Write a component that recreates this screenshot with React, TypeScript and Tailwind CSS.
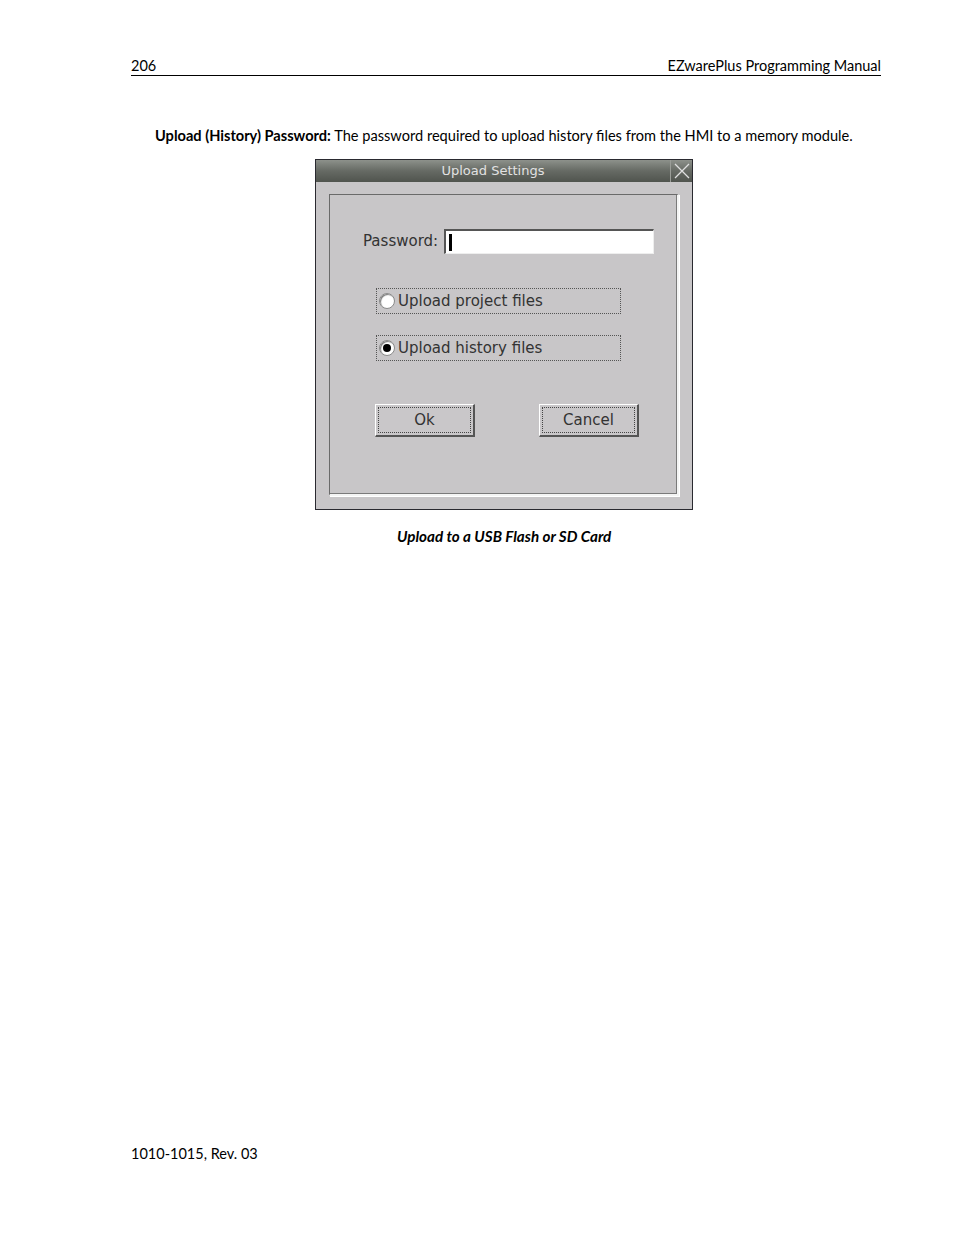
import React from 'react';

const pageFont = { fontFamily: 'Lato, "Open Sans", sans-serif' };
const uiFont = { fontFamily: '"DejaVu Sans", Verdana, sans-serif' };

const RadioOption: React.FC<{ label: string; checked?: boolean }> = ({ label, checked }) => (
  <div className="flex items-center w-[245px] h-[26px] border border-dotted border-[#555] pl-[2px]">
    <span className="w-[16px] h-[16px] rounded-full bg-white border border-[#8a8a8a] flex items-center justify-center shadow-[inset_1px_1px_1px_#777]">
      {checked && <span className="w-[8px] h-[8px] rounded-full bg-black" />}
    </span>
    <span className="ml-[3px] text-[15px] text-[#333]">{label}</span>
  </div>
);

const DialogButton: React.FC<{ label: string }> = ({ label }) => (
  <div className="w-[100px] h-[33px] bg-[#c9c7c9] border-t border-l border-t-white border-l-white border-b-2 border-r-2 border-b-[#555] border-r-[#555] p-[2px]">
    <div className="w-full h-full border border-dotted border-[#444] flex items-center justify-center text-[15px] text-[#333]">
      {label}
    </div>
  </div>
);

const UploadDialog: React.FC = () => (
  <div className="ml-[315px] w-[378px] h-[351px] bg-[#c8c6c8] border border-[#2a2a30] flex flex-col" style={uiFont}>
    <div className="h-[22px] flex bg-gradient-to-b from-[#8d918b] via-[#666a64] to-[#50544e]">
      <div className="flex-1 flex items-center justify-center text-[13px] text-[#e2e2e2]">Upload Settings</div>
      <div className="w-[22px] border-l border-[#9a9d98] flex items-center justify-center">
        <svg width="16" height="16" viewBox="0 0 16 16">
          <path d="M1 1 L15 15 M15 1 L1 15" stroke="#e0e0e0" strokeWidth="1.3" />
        </svg>
      </div>
    </div>
    <div className="flex-1 px-[13px] pt-[12px] pb-[13px]">
      <div className="h-full border-t border-l border-t-[#6a6a6a] border-l-[#6a6a6a] border-b-2 border-r-2 border-b-[#f4f4f4] border-r-[#f4f4f4] shadow-[inset_-1px_-1px_0_#7a7a7a,1px_1px_0_#fff]">
        <div className="flex items-center pl-[33px] pt-[34px]">
          <span className="text-[15px] text-[#333]">Password:</span>
          <div className="ml-[6px] w-[210px] h-[25px] bg-white border-t-2 border-l-2 border-t-[#555] border-l-[#555] border-b border-r border-b-[#eee] border-r-[#eee] flex items-center pl-[3px]">
            <span className="w-[3px] h-[17px] bg-black" />
          </div>
        </div>
        <div className="pl-[46px] pt-[34px] flex flex-col gap-[21px]">
          <RadioOption label="Upload project files" />
          <RadioOption label="Upload history files" checked />
        </div>
        <div className="pl-[45px] pt-[43px] flex gap-[64px]">
          <DialogButton label="Ok" />
          <DialogButton label="Cancel" />
        </div>
      </div>
    </div>
  </div>
);

export default function App() {
  return (
    <div className="w-[954px] h-[1235px] bg-white text-black flex flex-col" style={pageFont}>
      <div className="ml-[131px] mr-[73px] mt-[57px] flex justify-between items-end border-b border-black pb-[1px] text-[14.5px] leading-[17px]">
        <span>206</span>
        <span>EZwarePlus Programming Manual</span>
      </div>
      <p className="ml-[155px] mt-[51px] text-[14.6px] leading-[17px]">
        <span className="font-bold">Upload (History) Password:</span> The password required to upload history files from the HMI to a memory module.
      </p>
      <div className="mt-[15px]">
        <UploadDialog />
      </div>
      <p className="mt-[18px] ml-[397px] text-[15.2px] leading-[17px] font-bold italic">Upload to a USB Flash or SD Card</p>
      <div className="flex-1" />
      <p className="ml-[131px] mb-[73px] text-[14.5px] leading-[17px]">1010-1015, Rev. 03</p>
    </div>
  );
}
